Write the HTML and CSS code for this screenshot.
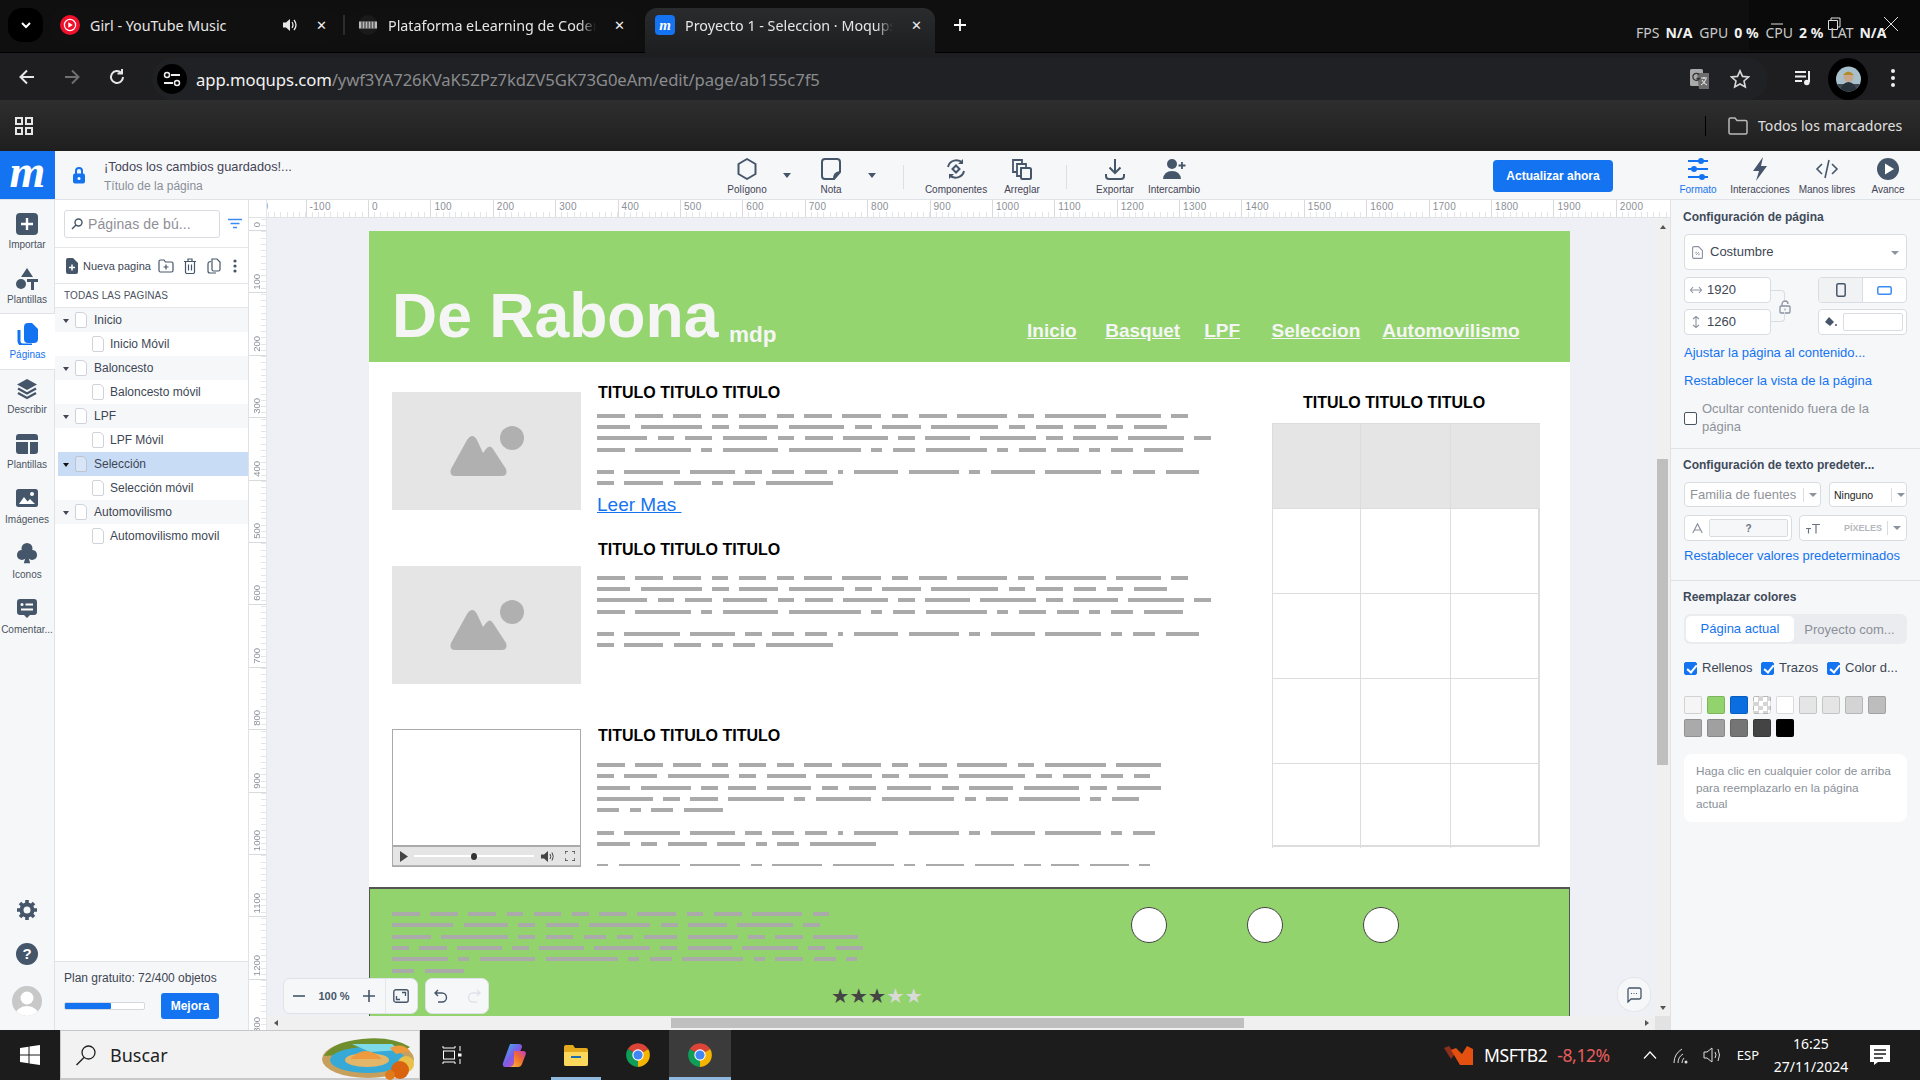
FILE: index.html
```html
<!DOCTYPE html>
<html lang="es">
<head>
<meta charset="utf-8">
<title>Proyecto 1 - Seleccion · Moqups</title>
<link rel="stylesheet" href="styles.css">
</head>
<body>
<header class="chrome">
  <div class="tabstrip">
    <div class="tab-search"><svg width="14" height="14" viewBox="0 0 14 14"><path d="M3 5l4 4 4-4" fill="none" stroke="#fff" stroke-width="2"/></svg></div>
    <div class="tab tab-bg">
      <svg class="fav" width="20" height="20" viewBox="0 0 20 20"><circle cx="10" cy="10" r="10" fill="#f0122d"/><circle cx="10" cy="10" r="5.6" fill="none" stroke="#fff" stroke-width="1.2"/><path d="M8.3 7.2l4.4 2.8-4.4 2.8z" fill="#fff"/></svg>
      <span class="tab-title">Girl - YouTube Music</span>
      <svg class="tab-sound" width="16" height="16" viewBox="0 0 16 16"><path d="M1 5.5h3L8 2v12L4 10.500H1z" fill="#e8e8e8"/><path d="M10 5q2 3 0 6M12 3q4 5 0 10" fill="none" stroke="#e8e8e8" stroke-width="1.300"/></svg>
      <span class="tab-x">✕</span>
    </div>
    <div class="tab-sep"></div>
    <div class="tab tab-bg tab-two">
      <svg class="fav" width="20" height="20" viewBox="0 0 20 20"><circle cx="10" cy="10" r="10" fill="#1a1a1a"/><rect x="1" y="6.500" width="18" height="7" fill="#bbb"/><path d="M4 6.500v7M7 6.500v7M10 6.500v7M13 6.500v7M16 6.500v7" stroke="#222"/></svg>
      <span class="tab-title fade">Plataforma eLearning de Coderh</span>
      <span class="tab-x">✕</span>
    </div>
    <div class="tab tab-active">
      <svg class="fav" width="20" height="20" viewBox="0 0 20 20"><rect width="20" height="20" rx="4" fill="#1473f0"/><text x="10" y="15" text-anchor="middle" class="fav-m">m</text></svg>
      <span class="tab-title fade">Proyecto 1 - Seleccion · Moqups</span>
      <span class="tab-x">✕</span>
    </div>
    <div class="tab-new"><svg width="14" height="14" viewBox="0 0 14 14"><path d="M7 1v12M1 7h12" stroke="#fff" stroke-width="1.800"/></svg></div>
    <div class="winctl">
      <svg width="14" height="14" viewBox="0 0 14 14"><path d="M1 7h12" stroke="#ddd"/></svg>
      <svg width="14" height="14" viewBox="0 0 14 14"><path d="M1.500 3.500h9v9h-9zM4 3.500V1h9v9h-2.500" fill="none" stroke="#ddd"/></svg>
      <svg width="16" height="16" viewBox="0 0 16 16"><path d="M1 1l14 14M15 1L1 15" stroke="#ddd"/></svg>
    </div>
    <div class="fps"><span>FPS</span><b>N/A</b><span>GPU</span><b>0 %</b><span>CPU</span><b>2 %</b><span>LAT</span><b>N/A</b></div>
  </div>
  <div class="addr">
    <svg class="nav-ic" width="20" height="20" viewBox="0 0 20 20"><path d="M17 10H4M10 3.500L3.500 10l6.500 6.500" fill="none" stroke="#e6e6e6" stroke-width="2"/></svg>
    <svg class="nav-ic" width="20" height="20" viewBox="0 0 20 20"><path d="M3 10h13M10 3.500l6.500 6.500-6.500 6.500" fill="none" stroke="#6f6f6f" stroke-width="2"/></svg>
    <svg class="nav-ic" width="20" height="20" viewBox="0 0 20 20"><path d="M16 10a6 6 0 1 1-1.800-4.300M15 2v4.500h-4.500" fill="none" stroke="#e6e6e6" stroke-width="2"/></svg>
    <div class="omni">
      <span class="site-ic"><svg width="18" height="18" viewBox="0 0 18 18"><path d="M8 5h9M1 13h9" stroke="#eee" stroke-width="1.800"/><circle cx="4" cy="5" r="2.500" fill="none" stroke="#eee" stroke-width="1.500"/><circle cx="14" cy="13" r="2.500" fill="none" stroke="#eee" stroke-width="1.500"/></svg></span>
      <span class="url"><span class="url-host">app.moqups.com</span>/ywf3YA726KVaK5ZPz7kdZV5GK73G0eAm/edit/page/ab155c7f5</span>
      <svg class="omni-ic" width="22" height="22" viewBox="0 0 22 22"><rect x="1" y="1" width="13" height="17" rx="1.500" fill="#a9a9a9"/><path d="M8 5h12v16H10z" fill="#6d6d6d"/><path d="M10 6.500a3.500 3.500 0 1 0 .5 4H7.500" fill="none" stroke="#333" stroke-width="1.300"/><path d="M12 10h6M15 9v2M17 11q-2 5-5 6M13 12q2 4 5 5" stroke="#eee" fill="none"/></svg>
      <svg class="omni-ic star" width="20" height="20" viewBox="0 0 20 20"><path d="M10 1.800l2.500 5.600 6 .6-4.500 4 1.300 6L10 15l-5.300 3 1.300-6-4.500-4 6-.6z" fill="none" stroke="#d8d8d8" stroke-width="1.600"/></svg>
    </div>
    <svg class="queue" width="20" height="20" viewBox="0 0 20 20"><path d="M1 4h11M1 8.500h11M1 13h7" stroke="#eee" stroke-width="2"/><path d="M15 3v11" stroke="#eee" stroke-width="2"/><circle cx="12.800" cy="14.500" r="2.800" fill="#eee"/></svg>
    <div class="avatar-wrap"><svg width="25" height="26" viewBox="0 0 25 26"><defs><clipPath id="avc"><circle cx="12.500" cy="13" r="12.500"/></clipPath></defs><g clip-path="url(#avc)"><rect width="25" height="26" fill="#a8c0cc"/><rect y="18" width="25" height="8" fill="#3e4a50"/><circle cx="12.500" cy="11" r="5" fill="#c9a78c"/><path d="M7 9q5-7 11 0z" fill="#b28c2c"/><path d="M4 26q2-10 8.500-10T21 26z" fill="#27323a"/></g></svg></div>
    <svg width="6" height="20" viewBox="0 0 6 20" class="kebab"><circle cx="3" cy="3" r="2" fill="#eee"/><circle cx="3" cy="10" r="2" fill="#eee"/><circle cx="3" cy="17" r="2" fill="#eee"/></svg>
  </div>
  <div class="bookmarks">
    <svg width="18" height="18" viewBox="0 0 18 18" class="apps"><path d="M1 1h6v6H1zM11 1h6v6h-6zM1 11h6v6H1zM11 11h6v6h-6z" fill="none" stroke="#e6e6e6" stroke-width="2"/></svg>
    <div class="bm-sep"></div>
    <svg class="bm-folder" width="20" height="18" viewBox="0 0 20 18"><path d="M1 2.500Q1 1 2.500 1H7l2 2.500h8.500Q19 3.500 19 5v10.500Q19 17 17.500 17h-15Q1 17 1 15.500z" fill="none" stroke="#b9b9b9" stroke-width="1.500"/></svg>
    <span class="bm-text">Todos los marcadores</span>
  </div>
</header>

<div class="app">
  <div class="topbar">
    <div class="logo">m</div>
    <div class="status">
      <svg width="14" height="18" viewBox="0 0 14 18"><path d="M4 8V5a3 3 0 0 1 6 0v3" fill="none" stroke="#1473f0" stroke-width="2"/><rect x="1" y="7.500" width="12" height="10" rx="2" fill="#1473f0"/><circle cx="7" cy="12.500" r="1.500" fill="#fff"/></svg>
      <div class="status-text"><span class="saved">¡Todos los cambios guardados!...</span><span class="pagetitle">Título de la página</span></div>
    </div>
    <div class="tool t-poly"><svg width="24" height="24" viewBox="0 0 24 24"><path d="M12 2l8.500 5v10L12 22l-8.500-5V7z" fill="none" stroke="#46566a" stroke-width="2" stroke-linejoin="round"/></svg><span>Polígono</span></div>
    <div class="tool-caret"></div>
    <div class="tool t-note"><svg width="24" height="24" viewBox="0 0 24 24"><path d="M15 22H6a3 3 0 0 1-3-3V5a3 3 0 0 1 3-3h12a3 3 0 0 1 3 3v10zM15 22c0-4 1-6 6-7" fill="none" stroke="#46566a" stroke-width="2" stroke-linejoin="round"/></svg><span>Nota</span></div>
    <div class="tool-caret"></div>
    <div class="tool-sep"></div>
    <div class="tool t-comp"><svg width="24" height="24" viewBox="0 0 24 24"><path d="M4 10a8.500 8.500 0 0 1 14.500-4M20 14a8.500 8.500 0 0 1-14.500 4" fill="none" stroke="#46566a" stroke-width="2"/><path d="M19 2v5h-5zM5 22v-5h5z" fill="#46566a"/><path d="M12 8.500l3.500 3.500-3.500 3.500L8.500 12z" fill="none" stroke="#46566a" stroke-width="2"/></svg><span>Componentes</span></div>
    <div class="tool t-arr"><svg width="24" height="24" viewBox="0 0 24 24"><path d="M3 3h9v4H7v8H3zM7 7h9v4h-5v8H7z" fill="none" stroke="#46566a" stroke-width="1.800"/><rect x="11" y="11" width="10" height="11" rx="1.500" fill="none" stroke="#46566a" stroke-width="2"/></svg><span>Arreglar</span></div>
    <div class="tool-sep sep2"></div>
    <div class="tool t-exp"><svg width="24" height="24" viewBox="0 0 24 24"><path d="M12 2v14M6.500 10.500L12 16l5.500-5.500M3 17v2a3 3 0 0 0 3 3h12a3 3 0 0 0 3-3v-2" fill="none" stroke="#46566a" stroke-width="2"/></svg><span>Exportar</span></div>
    <div class="tool t-int"><svg width="24" height="24" viewBox="0 0 24 24"><circle cx="10" cy="7" r="5" fill="#46566a"/><path d="M1 22q1-8 9-8t9 8z" fill="#46566a"/><path d="M20 5v7M16.500 8.500h7" stroke="#46566a" stroke-width="1.800"/></svg><span>Intercambio</span></div>
    <button class="update">Actualizar ahora</button>
    <div class="tool t-right blue"><svg width="24" height="24" viewBox="0 0 24 24"><path d="M2 4h20M2 12h20M2 20h20" stroke="#1473f0" stroke-width="2"/><circle cx="15" cy="4" r="3" fill="#1473f0"/><circle cx="8" cy="12" r="3" fill="#1473f0"/><circle cx="16" cy="20" r="3" fill="#1473f0"/></svg><span>Formato</span></div>
    <div class="tool t-right"><svg width="24" height="24" viewBox="0 0 24 24"><path d="M15 0L5 14h6l-3 10 11-15h-6z" fill="#46566a"/></svg><span>Interacciones</span></div>
    <div class="tool t-right"><svg width="24" height="24" viewBox="0 0 24 24"><path d="M7 7l-5 5 5 5M17 7l5 5-5 5M14 3l-4 18" fill="none" stroke="#46566a" stroke-width="1.600"/></svg><span>Manos libres</span></div>
    <div class="tool t-right"><svg width="24" height="24" viewBox="0 0 24 24"><circle cx="12" cy="12" r="11" fill="#46566a"/><path d="M9 6.500L18 12l-9 5.500z" fill="#fff"/></svg><span>Avance</span></div>
  </div>

  <div class="workspace">
    <nav class="rail">
      <div class="rail-item first"><svg width="22" height="22" viewBox="0 0 22 22"><rect width="22" height="22" rx="4" fill="#46566a"/><path d="M11 5v12M5 11h12" stroke="#fff" stroke-width="2.400"/></svg><span>Importar</span></div>
      <div class="rail-item"><svg width="22" height="22" viewBox="0 0 22 22"><path d="M11 0l6 9H5z" fill="#46566a"/><circle cx="5" cy="16" r="5" fill="#46566a"/><path d="M11 11h11v3h-4v8h-3v-8h-4z" fill="#46566a"/></svg><span>Plantillas</span></div>
      <div class="rail-item active"><svg width="22" height="22" viewBox="0 0 22 22"><path d="M2 7v11a4 4 0 0 0 4 4h9" fill="none" stroke="#1473f0" stroke-width="3"/><path d="M7 4a4 4 0 0 1 4-4h4l6 6v10a4 4 0 0 1-4 4h-6a4 4 0 0 1-4-4z" fill="#1473f0"/></svg><span>Páginas</span></div>
      <div class="rail-item"><svg width="22" height="22" viewBox="0 0 22 22"><path d="M11 1l10 5.500L11 12 1 6.500z" fill="#46566a"/><path d="M2 10.500l9 5 9-5M2 15l9 5 9-5" fill="none" stroke="#46566a" stroke-width="2.400"/></svg><span>Describir</span></div>
      <div class="rail-item"><svg width="22" height="20" viewBox="0 0 22 20"><path d="M3 0h16a3 3 0 0 1 3 3v3H0V3a3 3 0 0 1 3-3zM0 8h12v12H3a3 3 0 0 1-3-3zM14 8h8v9a3 3 0 0 1-3 3h-5z" fill="#46566a"/></svg><span>Plantillas</span></div>
      <div class="rail-item"><svg width="22" height="20" viewBox="0 0 22 20"><rect width="22" height="18" rx="2.500" fill="#46566a"/><path d="M3 15l5-7 3.500 4.500L14 10l5 5z" fill="#fff"/><circle cx="16" cy="5" r="2" fill="#fff"/></svg><span>Imágenes</span></div>
      <div class="rail-item"><svg width="22" height="24" viewBox="0 0 22 24"><circle cx="11" cy="6" r="6" fill="#46566a"/><circle cx="5.500" cy="13" r="5.500" fill="#46566a"/><circle cx="16.500" cy="13" r="5.500" fill="#46566a"/><path d="M11 10l3.500 12h-7z" fill="#46566a"/></svg><span>Iconos</span></div>
      <div class="rail-item"><svg width="20" height="20" viewBox="0 0 20 20"><path d="M3 0h14a3 3 0 0 1 3 3v10a3 3 0 0 1-3 3h-4l-3 3-3-3H3a3 3 0 0 1-3-3V3a3 3 0 0 1 3-3z" fill="#46566a"/><circle cx="5" cy="5.500" r="1.500" fill="#fff"/><path d="M8.500 5.500H16M4 10.500h12" stroke="#fff" stroke-width="2"/></svg><span class="rail-clip">Comentar...</span></div>
      <div class="rail-bottom">
        <svg width="20" height="20" viewBox="0 0 20 20"><circle cx="10" cy="10" r="5.500" fill="none" stroke="#46566a" stroke-width="4"/><path d="M10 0v4M10 16v4M0 10h4M16 10h4M3 3l3 3M14 14l3 3M17 3l-3 3M6 14l-3 3" stroke="#46566a" stroke-width="3.600"/></svg>
        <svg width="22" height="22" viewBox="0 0 22 22"><circle cx="11" cy="11" r="11" fill="#46566a"/><text x="11" y="16" text-anchor="middle" class="help-q">?</text></svg>
        <svg width="30" height="30" viewBox="0 0 30 30"><defs><clipPath id="uc"><circle cx="15" cy="15" r="15"/></clipPath></defs><g clip-path="url(#uc)"><rect width="30" height="30" fill="#c8c8c8"/><circle cx="15" cy="12" r="6.500" fill="#fff"/><ellipse cx="15" cy="30" rx="12" ry="10" fill="#fff"/></g></svg>
      </div>
    </nav>

    <aside class="pages">
      <div class="search-row">
        <div class="search"><svg width="12" height="12" viewBox="0 0 12 12"><circle cx="7.500" cy="4.500" r="3.500" fill="none" stroke="#46566a" stroke-width="1.400"/><path d="M5 7l-4 4" stroke="#46566a" stroke-width="1.400"/></svg><span>Páginas de bú...</span></div>
        <svg width="14" height="12" viewBox="0 0 14 12"><path d="M0 1.500h14M2.500 5.500h9M5 9.500h4" stroke="#3d8bf5" stroke-width="1.600"/></svg>
      </div>
      <div class="page-actions">
        <svg width="12" height="16" viewBox="0 0 12 16"><path d="M2 0h5l5 5v9a2 2 0 0 1-2 2H2a2 2 0 0 1-2-2V2a2 2 0 0 1 2-2z" fill="#46566a"/><path d="M6 6.500v6M3 9.500h6" stroke="#fff" stroke-width="1.500"/></svg>
        <span class="new-page">Nueva pagina</span>
        <svg width="16" height="14" viewBox="0 0 16 14"><path d="M1 2.500Q1 1 2.500 1H6l1.500 2h6Q15 3 15 4.500v7q0 1.500-1.500 1.500h-11Q1 13 1 11.500z" fill="none" stroke="#46566a" stroke-width="1.200"/><path d="M8 5.500v5M5.500 8h5" stroke="#46566a" stroke-width="1.200"/></svg>
        <svg width="14" height="16" viewBox="0 0 14 16"><path d="M1 3.500h12M5 3V1h4v2M2.500 4v10a1.500 1.500 0 0 0 1.500 1.500h6a1.500 1.500 0 0 0 1.500-1.500V4M5.500 6.500v6M8.500 6.500v6" fill="none" stroke="#46566a" stroke-width="1.200"/></svg>
        <svg width="14" height="16" viewBox="0 0 14 16"><path d="M5 1h5l3 3v7.500A1.500 1.500 0 0 1 11.500 13h-5A1.500 1.500 0 0 1 5 11.500zM4 3.500Q1 3.500 1 6v7q0 2 2 2h6" fill="none" stroke="#46566a" stroke-width="1.200"/></svg>
        <svg width="4" height="14" viewBox="0 0 4 14"><circle cx="2" cy="2" r="1.600" fill="#46566a"/><circle cx="2" cy="7" r="1.600" fill="#46566a"/><circle cx="2" cy="12" r="1.600" fill="#46566a"/></svg>
      </div>
      <div class="all-pages">TODAS LAS PAGINAS</div>
      <ul class="tree">
        <li class="parent"><i class="caret"></i><i class="doc"></i>Inicio</li>
        <li class="child"><i class="doc"></i>Inicio Móvil</li>
        <li class="parent"><i class="caret"></i><i class="doc"></i>Baloncesto</li>
        <li class="child"><i class="doc"></i>Baloncesto móvil</li>
        <li class="parent"><i class="caret"></i><i class="doc"></i>LPF</li>
        <li class="child"><i class="doc"></i>LPF Móvil</li>
        <li class="parent selected"><i class="caret"></i><i class="doc"></i>Selección</li>
        <li class="child"><i class="doc"></i>Selección móvil</li>
        <li class="parent"><i class="caret"></i><i class="doc"></i>Automovilismo</li>
        <li class="child"><i class="doc"></i>Automovilismo movil</li>
      </ul>
      <div class="plan">
        <div class="plan-text">Plan gratuito: 72/400 objetos</div>
        <div class="plan-row"><div class="meter"><div class="meter-fill"></div></div><button class="upgrade">Mejora</button></div>
      </div>
    </aside>

    <div class="stage">
      <div class="v-ruler">
        <div class="corner"></div>
        <div class="v-clip"><div class="v-strip">
          <div><span>0</span></div><div><span>100</span></div><div><span>200</span></div><div><span>300</span></div><div><span>400</span></div><div><span>500</span></div><div><span>600</span></div><div><span>700</span></div><div><span>800</span></div><div><span>900</span></div><div><span>1000</span></div><div><span>1100</span></div><div><span>1200</span></div><div><span>1300</span></div>
        </div></div>
      </div>
      <div class="stage-main">
        <div class="h-ruler"><div class="h-strip">
          <div>-200</div><div>-100</div><div>0</div><div>100</div><div>200</div><div>300</div><div>400</div><div>500</div><div>600</div><div>700</div><div>800</div><div>900</div><div>1000</div><div>1100</div><div>1200</div><div>1300</div><div>1400</div><div>1500</div><div>1600</div><div>1700</div><div>1800</div><div>1900</div><div>2000</div>
        </div></div>
        <div class="view-row">
          <div class="canvas">
            <div class="mock">
              <div class="m-head">
                <h1 class="m-brand">De Rabona</h1>
                <span class="m-sub">mdp</span>
                <nav class="m-nav"><a>Inicio</a><a>Basquet</a><a>LPF</a><a>Seleccion</a><a>Automovilismo</a></nav>
              </div>
              <div class="m-main">
                <div class="m-left">
                  <article class="post p1">
                    <div class="thumb"><svg width="74" height="50" viewBox="0 0 74 50"><path d="M5 50Q-1 50 1 43L17 14Q22.500 6 27 14L33 27 36 23Q40 18 43 23L56 43Q58 50 52 50Z" fill="#b0b0b0"/><circle cx="62" cy="12" r="12" fill="#b0b0b0"/></svg></div>
                    <div class="post-body">
                      <h2 class="m-title">TITULO TITULO TITULO</h2>
                      <div class="ln"><i class="w5"></i><i class="w5"></i><i class="w5"></i><i class="w3"></i><i class="w5"></i><i class="w3"></i><i class="w5"></i><i class="w7"></i><i class="w3"></i><i class="w5"></i><i class="w9"></i><i class="w3"></i><i class="w11"></i><i class="w8"></i><i class="w3"></i></div>
                      <div class="ln"><i class="w6"></i><i class="w11"></i><i class="w3"></i><i class="w7"></i><i class="w10"></i><i class="w3"></i><i class="w7"></i><i class="w12"></i><i class="w3"></i><i class="w5"></i><i class="w4"></i><i class="w3"></i><i class="w6"></i></div>
                      <div class="ln"><i class="w9"></i><i class="w3"></i><i class="w5"></i><i class="w8"></i><i class="w3"></i><i class="w5"></i><i class="w8"></i><i class="w3"></i><i class="w8"></i><i class="w10"></i><i class="w3"></i><i class="w8"></i><i class="w10"></i><i class="w3"></i></div>
                      <div class="ln"><i class="w5"></i><i class="w10"></i><i class="w2"></i><i class="w10"></i><i class="w13"></i><i class="w2"></i><i class="w4"></i><i class="w11"></i><i class="w2"></i><i class="w5"></i><i class="w4"></i><i class="w2"></i><i class="w4"></i><i class="w7"></i></div>
                      <div class="ln para"><i class="w3"></i><i class="w10"></i><i class="w8"></i><i class="w3"></i><i class="w4"></i><i class="w4"></i><i class="w1"></i><i class="w8"></i><i class="w9"></i><i class="w2"></i><i class="w8"></i><i class="w10"></i><i class="w2"></i><i class="w4"></i><i class="w6"></i></div>
                      <div class="ln"><i class="w3"></i><i class="w7"></i><i class="w5"></i><i class="w2"></i><i class="w4"></i><i class="w12"></i></div>
                      <a class="more">Leer Mas </a>
                    </div>
                  </article>
                  <article class="post p2">
                    <div class="thumb"><svg width="74" height="50" viewBox="0 0 74 50"><path d="M5 50Q-1 50 1 43L17 14Q22.500 6 27 14L33 27 36 23Q40 18 43 23L56 43Q58 50 52 50Z" fill="#b0b0b0"/><circle cx="62" cy="12" r="12" fill="#b0b0b0"/></svg></div>
                    <div class="post-body">
                      <h2 class="m-title">TITULO TITULO TITULO</h2>
                      <div class="ln"><i class="w5"></i><i class="w5"></i><i class="w5"></i><i class="w3"></i><i class="w5"></i><i class="w3"></i><i class="w5"></i><i class="w7"></i><i class="w3"></i><i class="w5"></i><i class="w9"></i><i class="w3"></i><i class="w11"></i><i class="w8"></i><i class="w3"></i></div>
                      <div class="ln"><i class="w6"></i><i class="w11"></i><i class="w3"></i><i class="w7"></i><i class="w10"></i><i class="w3"></i><i class="w7"></i><i class="w12"></i><i class="w3"></i><i class="w5"></i><i class="w4"></i><i class="w3"></i><i class="w6"></i></div>
                      <div class="ln"><i class="w9"></i><i class="w3"></i><i class="w5"></i><i class="w8"></i><i class="w3"></i><i class="w5"></i><i class="w8"></i><i class="w3"></i><i class="w8"></i><i class="w10"></i><i class="w3"></i><i class="w8"></i><i class="w10"></i><i class="w3"></i></div>
                      <div class="ln"><i class="w5"></i><i class="w10"></i><i class="w2"></i><i class="w10"></i><i class="w13"></i><i class="w2"></i><i class="w4"></i><i class="w11"></i><i class="w2"></i><i class="w5"></i><i class="w4"></i><i class="w2"></i><i class="w4"></i><i class="w7"></i></div>
                      <div class="ln para"><i class="w3"></i><i class="w10"></i><i class="w8"></i><i class="w3"></i><i class="w4"></i><i class="w4"></i><i class="w1"></i><i class="w8"></i><i class="w9"></i><i class="w2"></i><i class="w8"></i><i class="w10"></i><i class="w2"></i><i class="w4"></i><i class="w6"></i></div>
                      <div class="ln"><i class="w3"></i><i class="w7"></i><i class="w5"></i><i class="w2"></i><i class="w4"></i><i class="w12"></i></div>
                    </div>
                  </article>
                  <article class="post p3">
                    <div class="video">
                      <div class="video-screen"></div>
                      <div class="video-bar">
                        <svg width="8" height="11" viewBox="0 0 8 11"><path d="M0 0l8 5.500L0 11z" fill="#444"/></svg>
                        <div class="v-track"><i class="v-knob"></i></div>
                        <svg width="13" height="13" viewBox="0 0 13 13"><path d="M0 4.500h3L7 1v11L3 8.500H0z" fill="#444"/><path d="M9 4q1.500 2.500 0 5M11 2.500q2.500 4 0 8" fill="none" stroke="#444"/></svg>
                        <svg class="v-full" width="10" height="10" viewBox="0 0 10 10"><path d="M0 3V0h3M7 0h3v3M10 7v3H7M3 10H0V7" fill="none" stroke="#444" stroke-width="1.300"/></svg>
                      </div>
                    </div>
                    <div class="post-body">
                      <h2 class="m-title">TITULO TITULO TITULO</h2>
                      <div class="ln"><i class="w5"></i><i class="w5"></i><i class="w5"></i><i class="w3"></i><i class="w5"></i><i class="w3"></i><i class="w5"></i><i class="w7"></i><i class="w3"></i><i class="w5"></i><i class="w9"></i><i class="w3"></i><i class="w11"></i><i class="w8"></i></div>
                      <div class="ln"><i class="w3"></i><i class="w6"></i><i class="w11"></i><i class="w3"></i><i class="w7"></i><i class="w10"></i><i class="w3"></i><i class="w7"></i><i class="w12"></i><i class="w3"></i><i class="w5"></i><i class="w4"></i><i class="w3"></i></div>
                      <div class="ln"><i class="w6"></i><i class="w9"></i><i class="w3"></i><i class="w5"></i><i class="w8"></i><i class="w3"></i><i class="w5"></i><i class="w8"></i><i class="w3"></i><i class="w8"></i><i class="w10"></i><i class="w3"></i><i class="w8"></i></div>
                      <div class="ln"><i class="w10"></i><i class="w3"></i><i class="w5"></i><i class="w10"></i><i class="w2"></i><i class="w10"></i><i class="w13"></i><i class="w2"></i><i class="w4"></i><i class="w11"></i><i class="w2"></i><i class="w5"></i></div>
                      <div class="ln"><i class="w4"></i><i class="w2"></i><i class="w4"></i><i class="w7"></i></div>
                      <div class="ln para"><i class="w3"></i><i class="w10"></i><i class="w8"></i><i class="w3"></i><i class="w4"></i><i class="w4"></i><i class="w1"></i><i class="w8"></i><i class="w9"></i><i class="w2"></i><i class="w8"></i><i class="w10"></i><i class="w2"></i><i class="w4"></i></div>
                      <div class="ln"><i class="w6"></i><i class="w3"></i><i class="w7"></i><i class="w5"></i><i class="w2"></i><i class="w4"></i><i class="w12"></i></div>
                      <div class="ln para cut"><i class="w2"></i><i class="w11"></i><i class="w9"></i><i class="w2"></i><i class="w9"></i><i class="w11"></i><i class="w2"></i><i class="w7"></i><i class="w7"></i><i class="w3"></i><i class="w5"></i><i class="w7"></i><i class="w2"></i></div>
                    </div>
                  </article>
                </div>
                <div class="m-right">
                  <h2 class="m-title side">TITULO TITULO TITULO</h2>
                  <div class="m-table">
                    <div class="th"></div><div class="th"></div><div class="th"></div>
                    <div></div><div></div><div></div>
                    <div></div><div></div><div></div>
                    <div></div><div></div><div></div>
                    <div></div><div></div><div></div>
                  </div>
                </div>
              </div>
              <div class="m-foot">
                <div class="foot-row">
                  <div class="foot-text">
                    <div class="ln"><i class="w5"></i><i class="w5"></i><i class="w5"></i><i class="w3"></i><i class="w5"></i><i class="w3"></i><i class="w5"></i><i class="w7"></i><i class="w3"></i><i class="w5"></i><i class="w9"></i><i class="w3"></i></div>
                    <div class="ln"><i class="w11"></i><i class="w8"></i><i class="w3"></i><i class="w6"></i><i class="w11"></i><i class="w3"></i><i class="w7"></i><i class="w10"></i><i class="w3"></i></div>
                    <div class="ln"><i class="w7"></i><i class="w12"></i><i class="w3"></i><i class="w5"></i><i class="w4"></i><i class="w3"></i><i class="w6"></i><i class="w9"></i><i class="w3"></i><i class="w5"></i><i class="w8"></i></div>
                    <div class="ln"><i class="w3"></i><i class="w5"></i><i class="w8"></i><i class="w3"></i><i class="w8"></i><i class="w10"></i><i class="w3"></i><i class="w8"></i><i class="w10"></i><i class="w3"></i><i class="w5"></i></div>
                    <div class="ln"><i class="w10"></i><i class="w2"></i><i class="w10"></i><i class="w13"></i><i class="w2"></i><i class="w4"></i><i class="w11"></i><i class="w2"></i><i class="w5"></i><i class="w4"></i><i class="w2"></i></div>
                    <div class="ln"><i class="w4"></i><i class="w7"></i></div>
                  </div>
                  <div class="dots"><i></i><i></i><i></i></div>
                </div>
                <div class="stars"><span class="on">★</span><span class="on">★</span><span class="on">★</span><span>★</span><span>★</span></div>
              </div>
            </div>
            <div class="zoom-ctl">
              <div class="zoom-box"><svg width="12" height="2" viewBox="0 0 12 2"><path d="M0 1h12" stroke="#46566a" stroke-width="1.600"/></svg><b>100 %</b><svg width="12" height="12" viewBox="0 0 12 12"><path d="M0 6h12M6 0v12" stroke="#46566a" stroke-width="1.600"/></svg><span class="zoom-fit"><svg width="16" height="14" viewBox="0 0 16 14"><rect x=".8" y=".8" width="14.400" height="12.400" rx="2" fill="none" stroke="#46566a" stroke-width="1.400"/><path d="M9 3.500h3.500V7M7 10.500H3.500V7" fill="none" stroke="#46566a" stroke-width="1.300"/></svg></span></div>
              <div class="undo-box"><svg width="14" height="14" viewBox="0 0 14 14"><path d="M4 1L1 4l3 3M1 4h7a4.500 4.500 0 0 1 0 9H4" fill="none" stroke="#46566a" stroke-width="1.400"/></svg><svg width="14" height="14" viewBox="0 0 14 14"><path d="M10 1l3 3-3 3M13 4H6a4.500 4.500 0 0 0 0 9h4" fill="none" stroke="#dfe2e8" stroke-width="1.400"/></svg></div>
            </div>
            <div class="chat-btn"><svg width="16" height="16" viewBox="0 0 16 16"><path d="M3 1h10a2 2 0 0 1 2 2v7a2 2 0 0 1-2 2H5l-3 3V3a2 2 0 0 1 1-2z" fill="none" stroke="#46566a" stroke-width="1.300"/><path d="M5 6.500h1M7.500 6.500h1M10 6.500h1" stroke="#46566a"/></svg></div>
          </div>
          <div class="vscroll"><i class="arrow-up"></i><div class="v-thumb"></div><i class="arrow-down"></i></div>
        </div>
        <div class="hscroll"><i class="arrow-left"></i><div class="h-thumb"></div><i class="arrow-right"></i><span class="h-corner"></span></div>
      </div>
    </div>

    <aside class="props">
      <section class="sec s1">
        <h3>Configuración de página</h3>
        <div class="field select-size"><svg width="11" height="13" viewBox="0 0 11 13"><path d="M2 .6h4.500L10.400 4.500v6.900a1 1 0 0 1-1 1H2a1.400 1.400 0 0 1-1.400-1.400V2A1.400 1.400 0 0 1 2 .6z" fill="none" stroke="#8b93a0" stroke-width="1.100"/><path d="M4 9l3-3M6 8.800h1.200V7.500M5 6.300H3.800v1.200" stroke="#8b93a0" fill="none" stroke-width=".8"/></svg><span>Costumbre</span><i class="dd"></i></div>
        <div class="size-grid">
          <div class="field num"><svg width="12" height="8" viewBox="0 0 12 8"><path d="M3 1L.5 4 3 7M9 1l2.500 3L9 7M1 4h10" fill="none" stroke="#8b93a0" stroke-width="1.100"/></svg><span>1920</span></div>
          <div class="link-col">
            <span class="link-top"></span>
            <svg width="12" height="14" viewBox="0 0 12 14"><path d="M3 6V4a3 3 0 0 1 6 0" fill="none" stroke="#8b93a0" stroke-width="1.300"/><rect x="1" y="6" width="10" height="7" rx="1" fill="none" stroke="#8b93a0" stroke-width="1.300"/><path d="M6 8.500v2" stroke="#8b93a0"/></svg>
            <span class="link-bot"></span>
          </div>
          <div class="orient"><span class="o-port"><svg width="10" height="14" viewBox="0 0 10 14"><rect x=".8" y=".8" width="8.400" height="12.400" rx="1.500" fill="none" stroke="#46566a" stroke-width="1.500"/></svg></span><span class="o-land"><svg width="15" height="9" viewBox="0 0 15 9"><rect x=".8" y=".8" width="13.400" height="7.400" rx="1.500" fill="none" stroke="#3d8bf5" stroke-width="1.500"/></svg></span></div>
          <div class="field num"><svg width="8" height="12" viewBox="0 0 8 12"><path d="M1 3l3-2.500L7 3M1 9l3 2.500L7 9M4 1v10" fill="none" stroke="#8b93a0" stroke-width="1.100"/></svg><span>1260</span></div>
          <div class="field fill"><svg width="13" height="12" viewBox="0 0 13 12"><path d="M5 1l5 5-4 4-5-4z" fill="#46566a"/><circle cx="12" cy="9" r="1" fill="#46566a"/></svg><i class="fill-box"></i></div>
        </div>
        <a class="plink l1">Ajustar la página al contenido...</a>
        <a class="plink l2">Restablecer la vista de la página</a>
        <label class="hide-out"><i class="cbox"></i><span>Ocultar contenido fuera de la página</span></label>
      </section>
      <section class="sec s2">
        <h3>Configuración de texto predeter...</h3>
        <div class="font-row">
          <div class="field fam"><span class="clip">Familia de fuentes</span><i class="vbar"></i><i class="dd"></i></div>
          <div class="field none"><span>Ninguno</span><i class="vbar"></i><i class="dd"></i></div>
        </div>
        <div class="font-row r2">
          <div class="field asize"><svg width="11" height="10" viewBox="0 0 11 10"><path d="M.8 10L5.500.8 10.200 10M2.500 7h6" fill="none" stroke="#8b93a0" stroke-width="1.200"/></svg><span class="qbox">?</span></div>
          <div class="field unit"><svg width="15" height="11" viewBox="0 0 15 11"><path d="M6 1.500h8M10 1.500V10.500M0 5.500h5M2.500 5.500v5" fill="none" stroke="#6b7380" stroke-width="1.200"/></svg><span class="px">PÍXELES</span><i class="vbar"></i><i class="dd"></i></div>
        </div>
        <a class="plink l3">Restablecer valores predeterminados</a>
      </section>
      <section class="sec s3">
        <h3>Reemplazar colores</h3>
        <div class="seg"><span class="seg-on">Página actual</span><span class="seg-off">Proyecto com...</span></div>
        <div class="checks">
          <label><i class="cbox on"></i>Rellenos</label>
          <label><i class="cbox on"></i>Trazos</label>
          <label><i class="cbox on"></i>Color d...</label>
        </div>
        <div class="swatches">
          <i class="c1"></i><i class="c2"></i><i class="c3"></i><i class="c4"></i><i class="c5"></i><i class="c6"></i><i class="c6"></i><i class="c7"></i><i class="c8"></i>
          <i class="c9"></i><i class="c10"></i><i class="c11"></i><i class="c12"></i><i class="c13"></i>
        </div>
        <p class="hint">Haga clic en cualquier color de arriba<br>para reemplazarlo en la página<br>actual</p>
      </section>
    </aside>
  </div>
</div>

<footer class="taskbar">
  <div class="start"><svg width="20" height="20" viewBox="0 0 20 20"><path d="M0 3l8.500-1.200v7.600H0zM9.500 1.600L20 0v9.400H9.500zM0 10.500h8.500v7.700L0 17zM9.500 10.500H20V20L9.500 18.400z" fill="#fff"/></svg></div>
  <div class="ts-search">
    <svg width="22" height="22" viewBox="0 0 22 22"><circle cx="13.500" cy="8.500" r="6.500" fill="none" stroke="#222" stroke-width="1.300"/><path d="M9 13.500L1.500 21" stroke="#222" stroke-width="1.500"/></svg>
    <span>Buscar</span>
    <svg class="island" width="96" height="44" viewBox="0 0 96 44"><ellipse cx="46" cy="23" rx="46" ry="19" fill="#c8a05e"/><path d="M2 20Q10 6 40 3q30-3 48 8l-12 8H18z" fill="#6f8f2e"/><ellipse cx="46" cy="24" rx="38" ry="13" fill="#37a9d6"/><path d="M30 8h40l8 6-30 2z" fill="#7ddbe9"/><ellipse cx="45" cy="24" rx="22" ry="7" fill="#e4b66a"/><path d="M28 23q16-16 32 0z" fill="#ef9a3c"/><path d="M68 12q12-6 20 3l-14 3z" fill="#ef9a3c"/><circle cx="84" cy="28" r="8" fill="#e8c04a"/><circle cx="78" cy="34" r="9" fill="#d9630f"/><circle cx="68" cy="39" r="5" fill="#e07a1b"/></svg>
  </div>
  <div class="tb-app taskview"><svg width="20" height="20" viewBox="0 0 20 20"><path d="M1 1v2h12V1M1 19v-2h12v2" fill="none" stroke="#fff"/><rect x="1.500" y="6" width="11" height="8" fill="none" stroke="#fff"/><path d="M18 1v5M18 14v5" stroke="#fff"/><rect x="16" y="8.500" width="3.500" height="3" fill="#fff"/></svg></div>
  <div class="tb-app"><svg width="26" height="26" viewBox="0 0 26 26"><defs><linearGradient id="cp1" x1="0" y1="0" x2="1" y2="1"><stop offset="0" stop-color="#2bc3f0"/><stop offset=".5" stop-color="#7f5be8"/><stop offset="1" stop-color="#f0479a"/></linearGradient><linearGradient id="cp2" x1="0" y1="1" x2="1" y2="0"><stop offset="0" stop-color="#f7c33c"/><stop offset=".6" stop-color="#f0682f"/><stop offset="1" stop-color="#c13bd0"/></linearGradient></defs><path d="M9 2h9q3 0 3 3L14 22q-1 3-4 3H5q-4 0-3-4z" fill="url(#cp1)"/><path d="M13 9h9q4 0 2.500 4L21 22q-1 3-4 3H8q4 0 5-4z" fill="url(#cp2)"/></svg></div>
  <div class="tb-app files"><svg width="26" height="24" viewBox="0 0 26 24"><path d="M1 4q0-2 2-2h7l2 3h11q2 0 2 2v14q0 2-2 2H3q-2 0-2-2z" fill="#e5a91e"/><path d="M1 9h24v12q0 2-2 2H3q-2 0-2-2z" fill="#fbd75b"/><rect x="8" y="13" width="10" height="2" fill="#1a6fb3"/></svg></div>
  <div class="tb-app"><svg width="26" height="26" viewBox="0 0 48 48"><path d="M24 24L5 13A22 22 0 0 1 43 13Z" fill="#db4437"/><path d="M24 24L43 13A22 22 0 0 1 24 46Z" fill="#f4b400"/><path d="M24 24V46A22 22 0 0 1 5 13Z" fill="#0f9d58"/><circle cx="24" cy="24" r="10.500" fill="#fff"/><circle cx="24" cy="24" r="8.500" fill="#4285f4"/></svg></div>
  <div class="tb-app current"><svg width="26" height="26" viewBox="0 0 48 48"><path d="M24 24L5 13A22 22 0 0 1 43 13Z" fill="#db4437"/><path d="M24 24L43 13A22 22 0 0 1 24 46Z" fill="#f4b400"/><path d="M24 24V46A22 22 0 0 1 5 13Z" fill="#0f9d58"/><circle cx="24" cy="24" r="10.500" fill="#fff"/><circle cx="24" cy="24" r="8.500" fill="#4285f4"/></svg></div>
  <div class="tray">
    <svg class="stock" width="30" height="20" viewBox="0 0 30 20"><path d="M0 3l5-2 6 8-4 5z" fill="#8c2f1b"/><path d="M7 5l5-2 6 6 5-8 6 3v16H16z" fill="#e4500f"/></svg>
    <span class="ticker">MSFTB2</span>
    <span class="change">-8,12%</span>
    <svg class="tray-ic chev" width="14" height="8" viewBox="0 0 14 8"><path d="M1 7.500L7 1l6 6.500" fill="none" stroke="#fff" stroke-width="1.200"/></svg>
    <svg class="tray-ic wifi" width="18" height="18" viewBox="0 0 18 18"><path d="M2 17Q2 8 10 3M6 17q0-6 5-9M10 17q0-3 2-5" fill="none" stroke="#ddd"/><circle cx="14" cy="16" r="1.500" fill="#ddd"/></svg>
    <svg class="tray-ic" width="20" height="18" viewBox="0 0 20 18"><path d="M1 6h3l5-4v14l-5-4H1z" fill="none" stroke="#ddd"/><path d="M12 6q2 3 0 6M15 3q3 6 0 12" fill="none" stroke="#ddd"/></svg>
    <span class="lang">ESP</span>
    <div class="clock"><span>16:25</span><span>27/11/2024</span></div>
    <svg class="notif" width="22" height="20" viewBox="0 0 22 20"><path d="M0 0h20v17H8l-4 3v-3H0z" fill="#fff"/><path d="M4 5h12M4 9h12M4 13h9" stroke="#1c1c1c" stroke-width="1.400"/></svg>
  </div>
</footer>
</body>
</html>
```
FILE: styles.css
```css
*{box-sizing:border-box}
html,body{margin:0;padding:0}
body{width:1920px;height:1080px;overflow:hidden;display:flex;flex-direction:column;font-family:"Liberation Sans",Arial,sans-serif;background:#fff}
i{display:block;font-style:normal}
h1,h2,h3,p,ul{margin:0;padding:0}
ul{list-style:none}
svg{display:block;flex:none}
button{font-family:inherit;border:0;cursor:default}

/* browser */
.chrome{height:151px;flex:none;color:#eee;font-family:"Noto Sans","Open Sans",sans-serif}
.tabstrip{height:53px;background:#0f0f0f;display:flex;align-items:flex-start;padding:8px 0 0 8px;position:relative;border-bottom:1px solid #000}
.tab-search{width:35px;height:34px;border-radius:14px;background:#000;display:flex;align-items:center;justify-content:center}
.tab{height:34px;display:flex;align-items:center;padding:0 0 0 10px;border-radius:12px;position:relative;font-size:14.300px}
.tab-bg{width:290px;margin-left:7px;background:#101010}
.tab-two{width:289px;margin-left:0}
.tab-sep{width:2px;height:20px;background:#2c2c2c;margin:7px 3px 0 3px}
.tab-active{width:290px;height:45px;margin-left:8px;background:linear-gradient(#2a2b2d,#1d1e20);border-radius:12px 12px 0 0;padding-bottom:11px}
.tab-title{margin-left:10px;white-space:nowrap;overflow:hidden;width:158px;color:#e6e6e6}
.fade{width:208px;-webkit-mask-image:linear-gradient(90deg,#000 92%,transparent)}
.tab-sound{position:absolute;left:232px}
.tab-x{font-size:13px;position:absolute;right:13px;color:#eee}
.tab-bg .fade+.tab-x{right:12px}
.fav-m{font:italic bold 15px "Liberation Serif",serif;fill:#fff}
.tab-new{margin-left:18px;margin-top:10px}
.winctl{position:absolute;right:0;top:0;width:171px;height:50px;background:#0a0a0a;display:flex;align-items:center;padding:0 21px 0 21px;justify-content:space-between}
.winctl svg{margin-top:-2px}
.fps{position:absolute;left:1635px;top:23px;display:flex;gap:6px;font-size:14px;color:#c9c9c9;white-space:nowrap}
.fps b{color:#f1f1f1;font-weight:700}
.fps span{margin-left:1px}
.addr{height:47px;background:#1e1e20;display:flex;align-items:center;position:relative}
.nav-ic{margin-left:17px;margin-right:8px}
.omni{width:1616px;height:42px;margin:5px 0 0 17px;background:#202124;border-radius:21px;display:flex;align-items:center;padding-left:5px}
.site-ic{width:30px;height:30px;border-radius:50%;background:#000;display:flex;align-items:center;justify-content:center}
.url{margin-left:9px;font-size:16.700px;color:#8a8b8e;white-space:nowrap;letter-spacing:-.1px;width:1485px}
.url-host{color:#f2f2f2}
.omni-ic{margin-left:8px}
.star{margin-left:19px}
.queue{margin-left:26px;margin-top:2px}
.avatar-wrap{width:40px;height:42px;border-radius:50%;background:#000;margin:5px 0 0 14px;display:flex;align-items:center;justify-content:center}
.kebab{margin:2px 0 0 22px}
.bookmarks{height:51px;background:linear-gradient(#2e2e2e,#1f1f1f);display:flex;align-items:center;padding-left:15px;font-size:14.100px}
.apps{margin-right:1672px}
.bm-sep{width:1px;height:20px;background:#000;margin-right:22px}
.bm-folder{margin-right:10px}
.bm-text{color:#e0e0e0;white-space:nowrap}

/* app */
.app{height:879px;flex:none;display:flex;flex-direction:column;background:#fff}
.topbar{height:49px;background:#f6f7f9;border-bottom:1px solid #dfe2e6;display:flex;flex:none;align-items:stretch}
.logo{width:55px;background:#1473f0;color:#fff;font:italic bold 46px/42px "Liberation Serif",serif;text-align:center}
.status{width:660px;display:flex;align-items:center;padding-left:17px}
.status-text{display:flex;flex-direction:column;margin-left:18px;gap:5px;font-size:13px;line-height:14px;padding-top:2px}
.saved{color:#445;font-size:12.800px}
.pagetitle{color:#8a8f98;font-size:12px}
.tool{display:flex;flex-direction:column;align-items:center;padding-top:6px;font-size:10px;color:#445;white-space:nowrap}
.tool span{margin-top:3px;line-height:12px}
.tool svg{height:24px}
.t-poly,.t-note{width:64px}
.t-comp{width:62px;margin-left:0}
.t-arr{width:60px;margin-left:5px}
.t-exp{width:60px}
.t-int{width:58px}
.tool-caret{width:16px;position:relative}
.tool-caret::after{content:"";position:absolute;left:4px;top:22px;border:4px solid transparent;border-top:5px solid #46566a}
.t-note{margin-left:4px}
.t-note+.tool-caret{margin-left:1px}
.tool-sep{width:1px;height:24px;background:#dcdfe4;margin:14px 21px 0 23px}
.sep2{margin:14px 18px 0 14px}
.update{width:120px;height:32px;margin:9px 54px 0 290px;background:#1473f0;color:#fff;font-weight:700;font-size:12px;border-radius:4px}
.t-right{width:62px;margin-left:0}
.t-right+.t-right+.t-right{margin-left:5px}
.t-right+.t-right+.t-right+.t-right{margin-left:0;width:60px}
.blue{color:#1473f0;width:62px;margin-left:0}

.workspace{flex:1;display:flex;min-height:0}
.rail{width:55px;flex:none;background:#f6f7f9;border-right:1px solid #e0e2e6;display:flex;flex-direction:column;padding-top:4px}
.rail-item{height:55px;display:flex;flex-direction:column;align-items:center;font-size:10px;color:#4a5360;position:relative;padding-top:9px;width:54px}
.rail-item svg{height:22px}
.rail-item span{position:absolute;top:35px;line-height:12px;white-space:nowrap}
.rail-item.active{background:#fff;color:#1473f0;width:55px;z-index:1;box-shadow:0 -1px #e0e2e6,0 1px #e0e2e6}
.rail-bottom{margin-top:auto;display:flex;flex-direction:column;align-items:center;padding-bottom:14px}
.rail-bottom svg:nth-child(2){margin-top:23px}
.rail-bottom svg:nth-child(3){margin-top:21px}
.help-q{font:bold 15px "Liberation Sans",sans-serif;fill:#fff}

.pages{width:194px;flex:none;display:flex;flex-direction:column;background:#fff;border-right:1px solid #e0e2e6}
.search-row{height:48px;flex:none;display:flex;align-items:center;padding:1px 0 0 9px;border-bottom:1px solid #e4e6ea}
.search{width:156px;height:28px;border:1px solid #d9dbe0;border-radius:3px;display:flex;align-items:center;padding-left:6px;font-size:14px;color:#8f8f95;letter-spacing:.1px;margin-right:8px}
.search span{margin-left:5px;white-space:nowrap}
.page-actions{height:36px;flex:none;display:flex;align-items:center;padding-left:11px;border-bottom:1px solid #e4e6ea}
.new-page{font-size:11px;color:#3d4654;margin:0 8px 0 5px;white-space:nowrap;width:67px}
.page-actions svg:nth-of-type(2){margin-right:9px}
.page-actions svg:nth-of-type(3){margin-right:10px}
.page-actions svg:nth-of-type(4){margin-right:12px}
.all-pages{height:24px;flex:none;line-height:24px;padding-left:9px;font-size:10px;color:#4a5360;border-bottom:1px solid #e4e6ea;letter-spacing:.1px}
.tree li{height:24px;display:flex;align-items:center;font-size:12px;color:#3d4654;white-space:nowrap}
.parent{background:#f6f7f9;padding-left:8px}
.child{background:#fff;padding-left:37px}
.selected{background:#c9dcf5;margin-left:3px;padding-left:5px;color:#111}
.caret{width:0;height:0;border:3.500px solid transparent;border-top:4px solid #445;margin:4px 6px 0 0}
.selected .caret{border-top-color:#111}
.doc{width:12px;height:16px;border:1.200px solid #cfd2d8;border-radius:2px 5px 2px 2px;margin-right:6px;background:#fff}
.parent .doc{margin-right:7px}
.selected .doc{background:#d7e5f7;border-color:#bcc4cf}
.plan{margin-top:auto;height:69px;border-top:1px solid #e0e2e6;background:#f6f7f9;padding:8px 0 0 9px;font-size:12px;color:#3d4654}
.plan-text{line-height:16px;white-space:nowrap}
.plan-row{display:flex;align-items:center;margin-top:7px}
.meter{width:81px;height:8px;border:1px solid #d5d8dd;border-radius:2px;background:#fff}
.meter-fill{width:46px;height:6px;background:#1473f0;border-radius:1px}
.upgrade{width:58px;height:26px;margin-left:16px;background:#1473f0;color:#fff;font-weight:700;font-size:12px;border-radius:3px}

.stage{width:1421px;flex:none;display:flex;min-width:0}
.v-ruler{width:18px;flex:none;background:#fff;border-right:1px solid #e4e6ea;display:flex;flex-direction:column}
.corner{height:18px;flex:none;border-bottom:1px solid #e0e2e6}
.v-clip{flex:1;overflow:hidden}
.v-strip{margin-top:-49.400px;background:repeating-linear-gradient(180deg,#e3e5e9 0 1px,transparent 1px 6.240px) right top/5px 100% no-repeat}
.v-strip>div{height:62.400px;border-bottom:1px solid #d8dade;display:flex;align-items:flex-end;padding:0 0 3px 2px}
.v-strip span{writing-mode:vertical-rl;transform:rotate(180deg);font-size:9.500px;color:#8b8f96;line-height:11px}
.stage-main{flex:1;min-width:0;display:flex;flex-direction:column;background:#eef0f5}
.h-ruler{height:18px;flex:none;background:#fff;border-bottom:1px solid #e0e2e6;overflow:hidden}
.h-strip{display:flex;margin-left:-23.800px;width:1500px;height:17px;background:repeating-linear-gradient(90deg,#e3e5e9 0 1px,transparent 1px 6.240px) left bottom/100% 5px no-repeat}
.h-strip>div{width:62.400px;flex:none;border-left:1px solid #d8dade;padding-left:3px;font-size:10px;letter-spacing:.3px;color:#8b8f96;line-height:14px;white-space:nowrap}
.view-row{flex:1;min-height:0;display:flex}
.canvas{flex:1;min-width:0;position:relative;overflow:hidden;padding:13px 0 0 102px}
.vscroll{width:15px;flex:none;background:#f0f0f0;display:flex;flex-direction:column;align-items:center;position:relative}
.arrow-up{position:absolute;top:4px;border:3px solid transparent;border-bottom:4px solid #555}
.arrow-down{position:absolute;bottom:3px;border:3px solid transparent;border-top:4px solid #555}
.v-thumb{width:11px;height:306px;margin-top:241px;background:#bfbfbf}
.hscroll{height:14px;flex:none;background:#f0f0f0;position:relative;display:flex;align-items:center}
.h-thumb{width:573px;height:10px;margin-left:404px;background:#bfbfbf}
.arrow-left{position:absolute;left:4px;border:3px solid transparent;border-right:4px solid #555}
.arrow-right{position:absolute;right:18px;border:3px solid transparent;border-left:4px solid #555}
.h-corner{position:absolute;right:0;top:0;width:15px;height:14px;background:#e2e2e2}

/* mock page on the canvas */
.mock{width:1201px;background:#fff;color:#000;font-family:"Liberation Sans",Arial,sans-serif}
.m-head{height:131px;background:#94d570;display:flex;align-items:flex-end;color:#f5f5f5;padding-left:23px;padding-right:50.500px}
.m-brand{font-size:62.500px;line-height:62px;font-weight:700;margin-bottom:16.500px;white-space:nowrap}
.m-sub{font-size:22.500px;line-height:22px;font-weight:700;margin:0 0 16px 10.500px}
.m-nav{margin-left:auto;display:flex;margin-bottom:22px;font-size:19px;line-height:19px;font-weight:700;text-decoration:underline}
.m-nav a:nth-child(2){margin-left:28.500px}
.m-nav a:nth-child(3){margin-left:24px}
.m-nav a:nth-child(4){margin-left:31.500px}
.m-nav a:nth-child(5){margin-left:22px}
.m-main{height:525px;display:flex}
.m-left{width:903px;padding:23px 0 0 23px;flex:none}
.post{display:flex}
.p1{height:157px}
.p2{height:186px}
.p3{height:150px}
.thumb{width:189px;height:118px;background:#e5e5e5;flex:none;display:flex;align-items:center;justify-content:center}
.p1 .thumb{margin-top:7px}
.p2 .thumb{margin-top:24px}
.post-body{margin-left:16px;flex:1;min-width:0}
.m-title{font-size:16px;line-height:16px;font-weight:700;margin-left:1px;white-space:nowrap}
.p1 .m-title{margin-bottom:12.600px}
.p2 .m-title{margin-bottom:17.700px}
.p3 .m-title{margin-bottom:19px}
.ln{display:flex;gap:10.500px;height:11.330px;align-items:flex-start}
.ln i{height:4px;background:#aaa;flex:none}
.ln.para{margin-top:11px}
.ln.cut{height:2px;overflow:hidden}
.ln.cut i{height:2px}
.w1{width:5.500px}.w2{width:11px}.w3{width:16.700px}.w4{width:22.200px}.w5{width:27.700px}.w6{width:33.300px}.w7{width:38.900px}.w8{width:44.400px}.w9{width:50px}.w10{width:55.500px}.w11{width:61px}.w12{width:66.600px}.w13{width:72.200px}
.more{display:block;font-size:19px;line-height:22px;color:#1473f0;text-decoration:underline;white-space:pre;margin-top:1.500px}
.video{width:189px;height:138px;margin-top:1px;border:1px solid #aaa;display:flex;flex-direction:column;flex:none;background:#fff}
.video-screen{flex:1}
.video-bar{height:21px;background:#e5e5e5;border-top:2px solid #aaa;border-bottom:1px solid #b5b5b5;display:flex;align-items:center;padding-left:7px}
.v-track{width:120px;height:2px;background:#fff;margin:0 7px 0 6px;position:relative}
.v-knob{position:absolute;left:57px;top:-2.500px;width:6px;height:7px;border-radius:50%;background:#333}
.v-full{margin-left:11px}
.m-right{padding-top:33px;flex:none;width:268px}
.side{margin:0 0 12px 31px}
.m-table{display:grid;grid-template-columns:88px 90px 90px;grid-auto-rows:85px;height:424px;border:1px solid #ddd;border-width:0 2px 2px 0}
.m-table>div{border:solid #ddd;border-width:1px 0 0 1.500px}
.m-table .th{background:#e5e5e5}
.m-foot{height:200px;background:#92d36e;border:solid #555;border-width:2px 1px 0;padding:23px 0 0 22px}
.foot-row{display:flex}
.foot-text{width:739px}
.dots{display:flex;gap:80px}
.dots i{width:36px;height:36px;margin-top:-5px;border-radius:50%;background:#fff;border:1px solid #444}
.stars{display:flex;margin:5px 0 0 439px;font-family:"DejaVu Sans",sans-serif;font-size:20.500px;line-height:22px;color:#d9d9d9}
.stars span{width:18.400px;text-align:center;white-space:nowrap}
.stars .on{color:#444}
.zoom-ctl{position:absolute;left:16px;top:760px;display:flex;gap:7px;height:36px}
.zoom-box,.undo-box{background:#f6f7f9;border:1px solid #dfe2e8;border-radius:7px;display:flex;align-items:center}
.zoom-box{width:135px;padding-left:9px;font-size:11px;color:#46566a}
.zoom-box b{width:35px;margin:0 11.500px;text-align:center;white-space:nowrap}
.zoom-fit{height:100%;margin-left:10px;padding-left:7px;border-left:1px solid #e4e6ea;display:flex;align-items:center}
.undo-box{width:64px;justify-content:space-between;padding:0 7px 0 8px}
.chat-btn{position:absolute;right:4px;top:759px;width:34px;height:35px;border-radius:50%/45%;background:#f6f7f9;border:1px solid #e4e6ea;display:flex;align-items:center;justify-content:center}

/* properties */
.props{width:250px;flex:1;background:#f6f7f9;border-left:1px solid #e0e2e6;font-size:13px;color:#3d4654}
.sec{padding:8px 13px 0 13px;border-bottom:1px solid #e0e2e6}
.s1{height:249px;padding-top:9px}
.s2{height:132px}
.sec:last-child{border-bottom:0}
.sec h3{font-size:12px;line-height:16px;font-weight:700;color:#3f4a5a;margin:0 0 9px -1px;white-space:nowrap}
.field{background:#fff;border:1px solid #d9dce1;border-radius:4px;display:flex;align-items:center;position:relative}
.select-size{height:36px;padding-left:7px}
.select-size span{margin:0 0 2px 7px}
.dd{width:0;height:0;border:4px solid transparent;border-top:4px solid #8b93a0;margin-top:4px}
.select-size .dd{position:absolute;right:7px;top:12px}
.size-grid{display:grid;grid-template-columns:87px 47px 89px;grid-template-rows:26px 26px;row-gap:6px;margin-top:7px}
.num{padding-left:5px}
.num svg{width:12px}
.num span{margin:0 0 2px 5px}
.link-col{grid-row:1/3;grid-column:2;display:flex;flex-direction:column;align-items:flex-start;padding-left:8px;justify-content:center;position:relative}
.link-col svg{margin-top:1px}
.link-top,.link-bot{position:absolute;left:0;width:14px;height:10px;border:solid #d9dce1;border-width:0 1px 0 0}
.link-top{top:13px;border-top-width:1px;border-radius:0 4px 0 0}
.link-bot{bottom:13px;border-bottom-width:1px;border-radius:0 0 4px 0}
.orient{display:flex;border:1px solid #d9dce1;border-radius:4px;overflow:hidden;background:#fff}
.orient span{flex:1;display:flex;align-items:center;justify-content:center}
.o-port{background:#f1f2f4;border-right:1px solid #d9dce1}
.fill{padding-left:5px}
.fill-box{width:60px;height:18px;border:1px solid #d9dce1;border-radius:2px;margin-left:6px}
.plink{display:block;color:#1473f0;line-height:16px;white-space:nowrap}
.l1{margin-top:10px}
.l2{margin-top:12px}
.l3{margin-top:7px}
.hide-out{display:flex;margin-top:11px;line-height:18px;color:#8f9399;width:200px}
.hide-out .cbox{margin:12px 5px 0 0}
.hide-out span{width:175px}
.cbox{width:13px;height:13px;border:1px solid #4a5360;border-radius:2px;flex:none;background:#fff;position:relative}
.cbox.on{background:#1473f0;border-color:#1473f0}
.cbox.on::after{content:"";position:absolute;left:3.500px;top:.5px;width:4px;height:8px;border:solid #fff;border-width:0 2px 2px 0;transform:rotate(40deg)}
.font-row{display:flex;gap:8px;height:25px}
.r2{margin-top:8px;height:26px;gap:7px}
.fam{width:137px;padding-left:5px;color:#8f9399}
.clip{width:107px;overflow:hidden;white-space:nowrap;flex:none}
.vbar{width:1px;height:14px;background:#d9dce1;margin:0 6px}
.fam .dd,.none .dd,.unit .dd{margin-left:-1px}
.none{width:78px;padding-left:4px;font-size:10.500px;color:#222}
.none span{width:51px;flex:none}
.asize{width:108px;padding-left:7px}
.qbox{width:79px;height:18px;margin-left:6px;border:1px solid #d9dce1;border-radius:2px;background:#f6f7f9;text-align:center;font-size:10px;line-height:17px;color:#6b7380;font-weight:700}
.unit{width:108px;padding-left:6px}
.px{font-size:9px;color:#b4b8be;font-weight:700;margin-left:23px;width:37px;white-space:nowrap}
.seg{height:30px;background:#ebecef;border-radius:6px;display:flex;align-items:center;padding:0 2px}
.seg-on{width:108px;height:26px;background:#fff;border-radius:5px;color:#1473f0;text-align:center;line-height:26px;flex:none}
.seg-off{flex:1;text-align:center;color:#8a8f98;white-space:nowrap}
.checks{display:flex;margin-top:16px;line-height:16px}
.checks label{display:flex;align-items:center;white-space:nowrap;gap:5px}
.checks label:nth-child(1){width:77px}
.checks label:nth-child(2){width:66px}
.swatches{display:grid;grid-template-columns:repeat(9,18px);gap:5px;margin-top:20px}
.swatches i{height:18px;border:1px solid rgba(0,0,0,.14);border-radius:2px}
.c1{background:#f5f5f5}.c2{background:#92d36e}.c3{background:#0a6ee0}.c5{background:#fff}.c6{background:#e5e5e5}.c7{background:#d4d4d4}.c8{background:#bdbdbd}.c9{background:#aaa}.c10{background:#a0a0a0}.c11{background:#757575}.c12{background:#444}.c13{background:#000}
.c4{background:repeating-conic-gradient(#d5d5d5 0 25%,#fff 0 50%) 0 0/9px 9px}
.hint{margin-top:17px;height:68px;background:#fff;border-radius:8px;padding:9px 0 0 12px;line-height:16.500px;font-size:11.800px;white-space:nowrap;color:#8a9099}

/* taskbar */
.taskbar{height:50px;flex:none;background:#1c1c1c;display:flex;align-items:center;color:#fff;font-family:"Noto Sans","Open Sans",sans-serif}
.start{width:60px;display:flex;justify-content:center}
.ts-search{width:360px;height:50px;background:#f2f2f2;border:1px solid #c8c8c8;border-bottom-width:2px;display:flex;align-items:center;padding-left:14px;color:#222;font-size:18px;position:relative}
.ts-search span{margin-left:13px}
.island{position:absolute;right:1px;top:5px}
.tb-app{width:62px;height:50px;display:flex;align-items:center;justify-content:center}
.taskview{width:63px}
.files{background:linear-gradient(#8fb8de,#8fb8de) center bottom/50px 3px no-repeat}
.current{background:#3b3b3b;box-shadow:inset 0 -3px #8fb8de}
.tray{margin-left:auto;display:flex;align-items:center;padding-right:28px;font-size:17.500px}
.ticker{margin-left:10px;letter-spacing:-.4px}
.change{margin-left:10px;color:#e85c5c;letter-spacing:-.4px}
.chev{margin-left:33px}
.tray-ic+.tray-ic{margin-left:13px}
.tray-ic.wifi{margin-left:15px}
.lang{font-size:13px;margin-left:14px}
.clock{width:90px;margin-left:7px;display:flex;flex-direction:column;align-items:center;font-size:14px;line-height:23px}
.notif{margin-left:14px}
```
